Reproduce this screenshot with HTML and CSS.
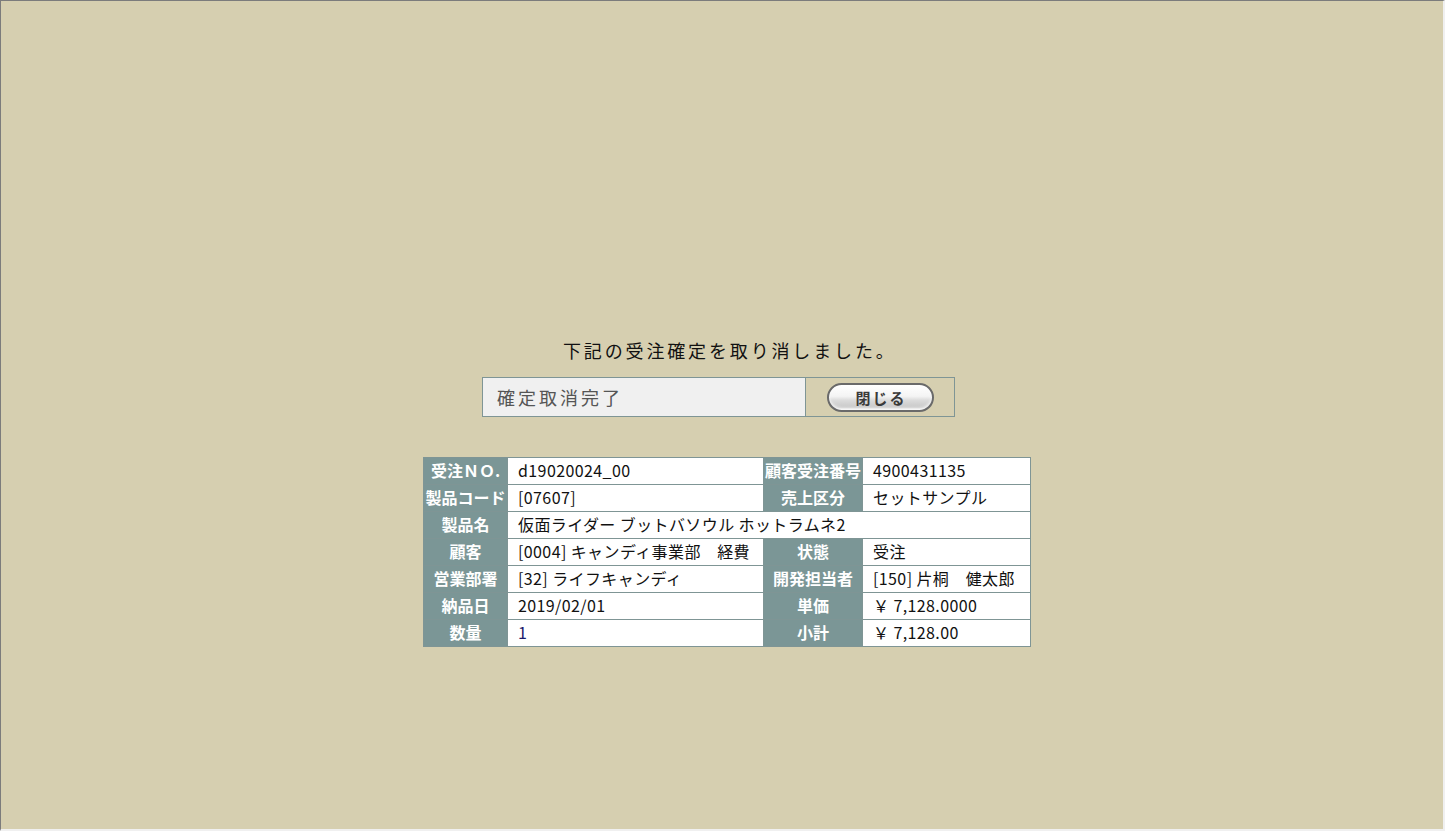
FILE: index.html
```html
<!DOCTYPE html>
<html lang="ja">
<head>
<meta charset="utf-8">
<title>確定取消完了</title>
<link rel="stylesheet" href="styles.css">
</head>
<body>
<div class="frame">
  <p class="message">下記の受注確定を取り消しました。</p>
  <table class="status">
    <tr>
      <td class="status-text">確定取消完了</td>
      <td class="status-action"><button class="close-btn" type="button">閉じる</button></td>
    </tr>
  </table>
  <table class="detail">
    <colgroup>
      <col class="c1"><col class="c2"><col class="c3"><col class="c4">
    </colgroup>
    <tr><th>受注ＮＯ.</th><td>d19020024_00</td><th>顧客受注番号</th><td>4900431135</td></tr>
    <tr><th>製品コード</th><td>[07607]</td><th>売上区分</th><td>セットサンプル</td></tr>
    <tr><th>製品名</th><td colspan="3">仮面ライダー ブットバソウル ホットラムネ2</td></tr>
    <tr><th>顧客</th><td>[0004] キャンディ事業部　経費</td><th>状態</th><td>受注</td></tr>
    <tr><th>営業部署</th><td>[32] ライフキャンディ</td><th>開発担当者</th><td>[150] 片桐　健太郎</td></tr>
    <tr><th>納品日</th><td>2019/02/01</td><th>単価</th><td>￥ 7,128.0000</td></tr>
    <tr><th>数量</th><td class="num">1</td><th>小計</th><td>￥ 7,128.00</td></tr>
  </table>
</div>
</body>
</html>
```
FILE: styles.css
```css
html, body {
  margin: 0;
  padding: 0;
  background: #d6cfb0;
}
.frame {
  box-sizing: border-box;
  width: 1445px;
  height: 831px;
  border-top: 1px solid #7c7c7c;
  border-left: 1px solid #7c7c7c;
  border-right: 2px solid #f0f0f0;
  border-bottom: 2px solid #f0f0f0;
  background: #d6cfb0;
  display: flex;
  flex-direction: column;
  align-items: flex-start;
  padding-top: 336px;
  font-family: "Noto Sans CJK JP", sans-serif;
}
.message {
  margin: 0 0 0 562px;
  font-size: 18px;
  letter-spacing: 2.85px;
  line-height: 26px;
  color: #111;
}
.status {
  margin: 14px 0 0 481px;
  border-collapse: collapse;
  width: 473px;
  height: 40px;
  border: 1px solid #7f9595;
}
.status td {
  border: 1px solid #7f9595;
  padding: 0;
}
.status-text {
  width: 308px;
  background: #f0f0f0;
  color: #555;
  font-size: 18px;
  letter-spacing: 3px;
  padding-left: 14px !important;
}
.status-action {
  text-align: center;
  background: #d6cfb0;
}
.close-btn {
  width: 107px;
  height: 29px;
  border-radius: 15px;
  border: 2px solid #6a6a6a;
  background: linear-gradient(#ffffff 0%, #f4f4f4 45%, #dcdcdc 60%, #c8c8c8 90%, #e8e8e8 100%);
  box-shadow: inset 0 1px 0 #fff, inset 0 -2px 3px rgba(255,255,255,0.8);
  font-family: "Noto Sans CJK JP", sans-serif;
  font-size: 15px;
  font-weight: bold;
  color: #3a3a3a;
  letter-spacing: 2px;
  padding: 0 0 0 2px;
  vertical-align: middle;
}
.detail {
  margin: 40px 0 0 422px;
  border-collapse: collapse;
  width: 607px;
  table-layout: fixed;
  font-size: 16px;
}
.c1 { width: 84px; }
.c2 { width: 256px; }
.c3 { width: 99px; }
.c4 { width: 168px; }
.detail th, .detail td {
  border: 1px solid #7f9595;
  height: 26px;
  box-sizing: border-box;
  padding: 0 0 3px 0;
  line-height: 20px;
  white-space: nowrap;
  overflow: hidden;
  vertical-align: middle;
}
.detail tr { height: 27px; }
.detail th {
  background: #7b9696;
  color: #fff;
  font-weight: bold;
  font-size: 16px;
  text-align: center;
}
.detail td {
  background: #fff;
  color: #111;
  padding-left: 10px;
  letter-spacing: 0.4px;
}
.detail td.num {
  color: #1a1a6a;
}
```
